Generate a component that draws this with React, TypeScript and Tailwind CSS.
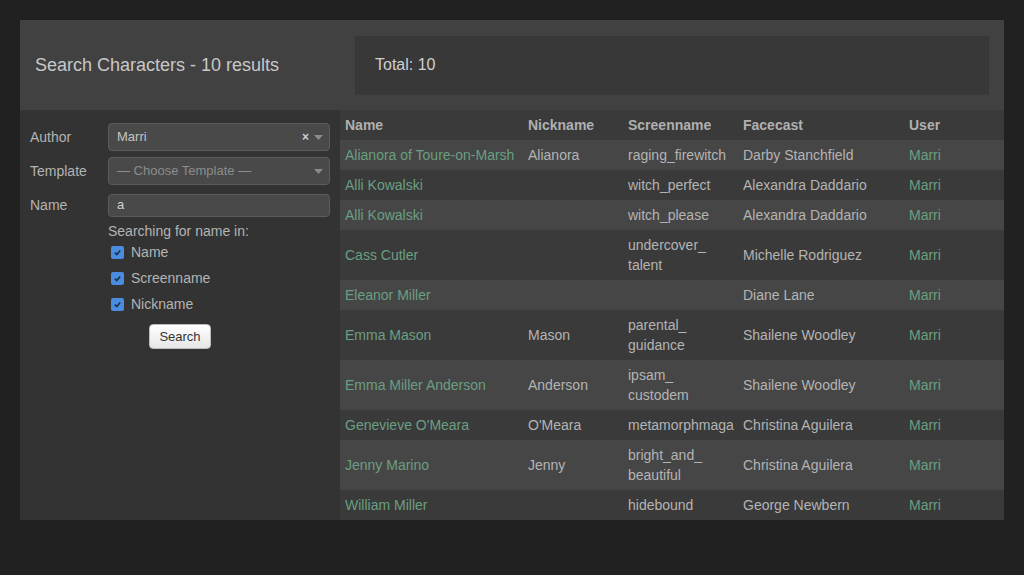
import React from 'react';

interface Row {
  name: string;
  nickname: string;
  screenname: string[];
  facecast: string;
  user: string;
}

const rows: Row[] = [
  { name: 'Alianora of Toure-on-Marsh', nickname: 'Alianora', screenname: ['raging_firewitch'], facecast: 'Darby Stanchfield', user: 'Marri' },
  { name: 'Alli Kowalski', nickname: '', screenname: ['witch_perfect'], facecast: 'Alexandra Daddario', user: 'Marri' },
  { name: 'Alli Kowalski', nickname: '', screenname: ['witch_please'], facecast: 'Alexandra Daddario', user: 'Marri' },
  { name: 'Cass Cutler', nickname: '', screenname: ['undercover_', 'talent'], facecast: 'Michelle Rodriguez', user: 'Marri' },
  { name: 'Eleanor Miller', nickname: '', screenname: [], facecast: 'Diane Lane', user: 'Marri' },
  { name: 'Emma Mason', nickname: 'Mason', screenname: ['parental_', 'guidance'], facecast: 'Shailene Woodley', user: 'Marri' },
  { name: 'Emma Miller Anderson', nickname: 'Anderson', screenname: ['ipsam_', 'custodem'], facecast: 'Shailene Woodley', user: 'Marri' },
  { name: "Genevieve O'Meara", nickname: "O'Meara", screenname: ['metamorphmaga'], facecast: 'Christina Aguilera', user: 'Marri' },
  { name: 'Jenny Marino', nickname: 'Jenny', screenname: ['bright_and_', 'beautiful'], facecast: 'Christina Aguilera', user: 'Marri' },
  { name: 'William Miller', nickname: '', screenname: ['hidebound'], facecast: 'George Newbern', user: 'Marri' },
];

function Check({ label }: { label: string }) {
  return (
    <label className="flex items-center gap-[7px] h-[26px] pl-[3px]">
      <span className="w-[13px] h-[13px] rounded-[2px] bg-[#4a8de0] flex items-center justify-center">
        <svg width="9" height="9" viewBox="0 0 10 10">
          <path d="M2 5.2 L4.2 7.3 L8 2.8" stroke="#1f2f45" strokeWidth="1.8" fill="none" />
        </svg>
      </span>
      <span>{label}</span>
    </label>
  );
}

function Caret() {
  return (
    <svg width="9" height="5" viewBox="0 0 9 5">
      <path d="M0 0 L9 0 L4.5 5 Z" fill="#8a8a8a" />
    </svg>
  );
}

export default function App() {
  return (
    <div className="min-h-[575px] bg-[#212121] pt-[20px] px-[20px] text-[14px] text-[#b4b4b4]" style={{ fontFamily: '"Liberation Sans", Arial, sans-serif' }}>
      <div className="w-[984px]">
        {/* header */}
        <div className="h-[90px] bg-[#414141] flex items-center">
          <div className="w-[335px] pl-[15px] text-[18px] text-[#c8c8c8]">Search Characters - 10 results</div>
          <div className="w-[634px] h-[59px] bg-[#383838] flex items-center pl-[20px] text-[16px] text-[#d0d0d0]">Total: 10</div>
        </div>

        <div className="flex">
          {/* filters */}
          <div className="w-[320px] h-[410px] bg-[#333333] pt-[13px] pl-[10px] pr-[10px]">
            <div className="flex items-center h-[28px]">
              <span className="w-[78px]">Author</span>
              <div className="flex-1 h-[28px] rounded-[4px] border border-[#5c5c5c] bg-[#494949] flex items-center pl-[8px] pr-[6px] text-[13px] text-[#c4c4c4]">
                <span className="flex-1">Marri</span>
                <span className="text-[12px] font-bold text-[#d0d0d0] mr-[5px]">×</span>
                <Caret />
              </div>
            </div>
            <div className="flex items-center h-[28px] mt-[6px]">
              <span className="w-[78px]">Template</span>
              <div className="flex-1 h-[28px] rounded-[4px] border border-[#5c5c5c] bg-[#494949] flex items-center pl-[8px] pr-[6px] text-[13px] text-[#8c8c8c]">
                <span className="flex-1">— Choose Template —</span>
                <Caret />
              </div>
            </div>
            <div className="flex items-center h-[24px] mt-[8px]">
              <span className="w-[78px]">Name</span>
              <div className="flex-1 h-[23px] rounded-[4px] border border-[#5c5c5c] bg-[#494949] flex items-center pl-[8px] text-[13px] text-[#d0d0d0]">a</div>
            </div>
            <div className="ml-[78px] mt-[5px]">
              <div className="h-[18px] leading-[18px]">Searching for name in:</div>
              <div className="-mt-[1px]">
                <Check label="Name" />
                <Check label="Screenname" />
                <Check label="Nickname" />
              </div>
            </div>
            <div className="flex justify-center mt-[7px]">
              <button className="h-[25px] px-[9px] rounded-[4px] border border-[#bdbdbd] bg-gradient-to-b from-[#ffffff] to-[#e6e6e6] text-[13px] text-[#333]">Search</button>
            </div>
          </div>

          {/* results table */}
          <div className="w-[664px] h-[410px] bg-[#3a3a3a]">
            <div className="flex h-[30px] items-center bg-[#3a3a3a] font-bold text-[#b0b0b0]">
              <div className="w-[183px] px-[5px]">Name</div>
              <div className="w-[100px] px-[5px]">Nickname</div>
              <div className="w-[115px] px-[5px]">Screenname</div>
              <div className="w-[166px] px-[5px]">Facecast</div>
              <div className="w-[100px] px-[5px]">User</div>
            </div>
            {rows.map((r, i) => (
              <div key={i} className={`flex items-center py-[5px] leading-[20px] ${i % 2 === 0 ? 'bg-[#464646]' : 'bg-[#3a3a3a]'}`}>
                <div className="w-[183px] px-[5px] text-[#6a9f82] whitespace-nowrap">{r.name}</div>
                <div className="w-[100px] px-[5px]">{r.nickname}</div>
                <div className="w-[115px] px-[5px]">
                  {r.screenname.length === 0 ? <div className="h-[20px]" /> : r.screenname.map((s, j) => <div key={j}>{s}</div>)}
                </div>
                <div className="w-[166px] px-[5px]">{r.facecast}</div>
                <div className="w-[100px] px-[5px] text-[#6a9f82]">{r.user}</div>
              </div>
            ))}
          </div>
        </div>
      </div>
    </div>
  );
}
